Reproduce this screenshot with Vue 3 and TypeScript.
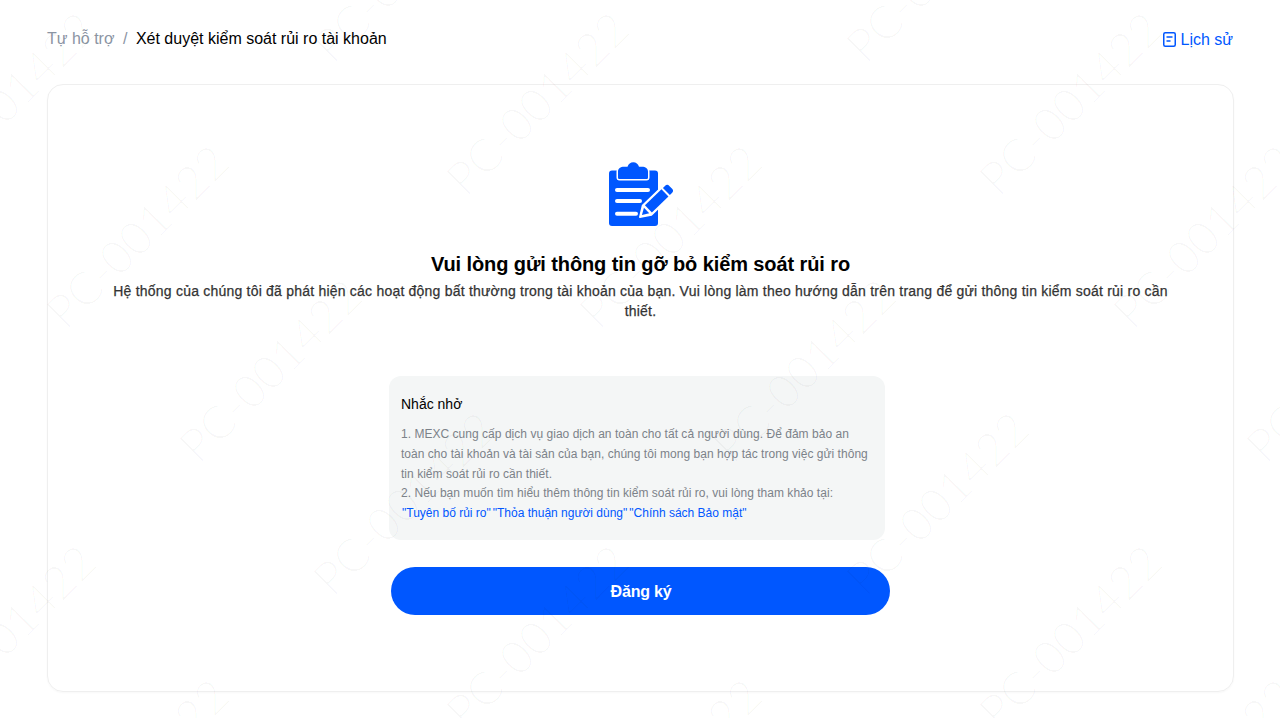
<template>
  <div class="page">
    <header class="top">
      <nav class="crumbs">
        <span class="crumb-link">Tự hỗ trợ</span>
        <span class="crumb-sep">/</span>
        <span class="crumb-current">Xét duyệt kiểm soát rủi ro tài khoản</span>
      </nav>
      <a class="history">
        <svg class="history-icon" width="13" height="15" viewBox="0 0 13 15" fill="none">
          <rect x="0.75" y="0.75" width="11.500" height="13.500" rx="1.500" stroke="#0057ff" stroke-width="1.500" />
          <path d="M3.500 5H9.500M3.500 9H7.500" stroke="#0057ff" stroke-width="1.500" />
        </svg>
        Lịch sử
      </a>
    </header>

    <main class="card">
      <svg class="hero" width="64" height="64" viewBox="0 0 64 64">
        <rect x="0" y="8.500" width="49" height="55.500" rx="3" fill="#0057ff" />
        <path
          d="M9 9.500C9 6.500 11.500 4.800 15 4.800H18.500C19.500 2 21.500 .3 24.300 .3S29 2 30 4.800H33C36.500 4.800 39 6.500 39 9.500V15.500C39 16.500 38.300 17 37.500 17H10.500C9.700 17 9 16.500 9 15.500Z"
          fill="#0057ff"
          stroke="#fff"
          stroke-width="3"
          paint-order="stroke"
        />
        <rect x="6" y="26" width="35" height="4" rx="2" fill="#fff" />
        <rect x="6" y="37" width="27" height="4" rx="2" fill="#fff" />
        <rect x="6" y="49.700" width="23" height="4" rx="2" fill="#fff" />
        <g transform="translate(31.500 54.500) rotate(-44)">
          <path d="M-1 0 9 -6.500H34V6.500H9Z" fill="#fff" stroke="#fff" stroke-width="1.500" stroke-linejoin="round" />
          <path d="M11 -5H34V5H11Z" fill="#0057ff" />
          <path d="M36 -5H38.500Q42 -5 42 -2V2Q42 5 38.500 5H36Z" fill="#0057ff" />
          <path d="M2 0 8.500 -3.800V3.800Z" fill="#0057ff" />
        </g>
      </svg>

      <h1 class="title">Vui lòng gửi thông tin gỡ bỏ kiểm soát rủi ro</h1>
      <p class="desc">
        Hệ thống của chúng tôi đã phát hiện các hoạt động bất thường trong tài khoản của bạn. Vui lòng làm theo hướng dẫn trên trang để gửi thông tin kiểm soát rủi ro cần thiết.
      </p>

      <section class="notice">
        <h2 class="notice-title">Nhắc nhở</h2>
        <p class="notice-text">
          1. MEXC cung cấp dịch vụ giao dịch an toàn cho tất cả người dùng. Để đảm bảo an toàn cho tài khoản và tài sản của bạn, chúng tôi mong bạn hợp tác trong việc gửi thông tin kiểm soát rủi ro cần thiết.
        </p>
        <p class="notice-text">2. Nếu bạn muốn tìm hiểu thêm thông tin kiểm soát rủi ro, vui lòng tham khảo tại:</p>
        <p class="notice-links">
          <a v-for="link in links" :key="link">"{{ link }}"</a>
        </p>
      </section>

      <button class="submit" type="button">Đăng ký</button>
    </main>

    <div class="watermarks" aria-hidden="true">
      <span
        v-for="mark in marks"
        :key="mark.id"
        class="watermark"
        :style="{ left: mark.x + 'px', top: mark.y + 'px' }"
      >PC-001422</span>
    </div>
  </div>
</template>

<script setup lang="ts">
interface Mark {
  id: string
  x: number
  y: number
}

const links: string[] = ['Tuyên bố rủi ro', 'Thỏa thuận người dùng', 'Chính sách Bảo mật']

// watermark repeats on a skewed lattice over the whole window
const marks: Mark[] = []
for (let m = -8; m <= 8; m++) {
  for (let n = -4; n <= 6; n++) {
    const x = 537 + m * 133.33 + n * 400
    const y = 103 + m * 133.33 - n * 133.33
    if (x > -200 && x < 1480 && y > -200 && y < 920) {
      marks.push({ id: `${m}_${n}`, x, y })
    }
  }
}
</script>

<style>
html,
body {
  margin: 0;
  background: #fff;
}
</style>

<style scoped>
.page {
  position: relative;
  box-sizing: border-box;
  height: 718px;
  padding: 0 46px 26px 47px;
  overflow: hidden;
  font-family: "Liberation Sans", Arial, sans-serif;
  color: #000;
}

.top {
  display: flex;
  justify-content: space-between;
  align-items: center;
  height: 84px;
  padding-bottom: 6px;
  box-sizing: border-box;
  font-size: 16px;
}

.crumbs {
  display: flex;
  align-items: center;
  margin-top: -1px;
}

.crumb-link {
  color: #8b94a3;
}

.crumb-sep {
  margin: 0 8.500px;
  color: #8b94a3;
}

.history {
  display: flex;
  align-items: center;
  gap: 4px;
  margin: 1px 1px 0 0;
  color: #0057ff;
}

.card {
  display: flex;
  flex-direction: column;
  align-items: center;
  box-sizing: border-box;
  height: 608px;
  padding: 77px 60px 0;
  border: 1px solid #efefef;
  border-radius: 16px;
  box-shadow: 0 1px 2px rgba(0, 0, 0, 0.03);
}

.hero {
  display: block;
}

.title {
  margin: 26px 0 5px;
  font-size: 20px;
  line-height: 24px;
  font-weight: 700;
  letter-spacing: -0.1px;
}

.desc {
  margin: 0;
  font-size: 14px;
  line-height: 20px;
  text-align: center;
  color: #333;
  letter-spacing: 0.215px;
  -webkit-text-stroke: 0.25px #333;
}

.notice {
  box-sizing: border-box;
  width: 496px;
  height: 164px;
  margin: 55px 7px 0 0;
  padding: 18px 12px 0;
  border-radius: 12px;
  background: #f4f6f6;
}

.notice-title {
  margin: 0 0 11px;
  font-size: 14px;
  line-height: 20px;
  font-weight: 400;
}

.notice-text {
  margin: 0;
  font-size: 12px;
  line-height: 19.800px;
  letter-spacing: 0.03px;
  color: #7c8289;
}

.notice-links {
  display: flex;
  gap: 2px;
  margin: 0;
  padding-left: 1px;
  font-size: 12px;
  line-height: 19.800px;
  color: #0057ff;
}

.submit {
  width: 499px;
  height: 48px;
  margin-top: 27px;
  padding: 1px 0 0 1px;
  border: none;
  border-radius: 24px;
  background: #0057ff;
  color: #fff;
  font-family: inherit;
  font-size: 16px;
  font-weight: 700;
  letter-spacing: -0.2px;
}

.watermarks {
  position: absolute;
  inset: 0;
  overflow: hidden;
  pointer-events: none;
}

.watermark {
  position: absolute;
  transform: translate(-50%, -50%) rotate(-45deg);
  font-family: "Lato", "Liberation Sans", sans-serif;
  font-size: 46px;
  font-weight: 300;
  line-height: 1;
  white-space: nowrap;
  color: rgba(0, 0, 0, 0.028);
}
</style>
